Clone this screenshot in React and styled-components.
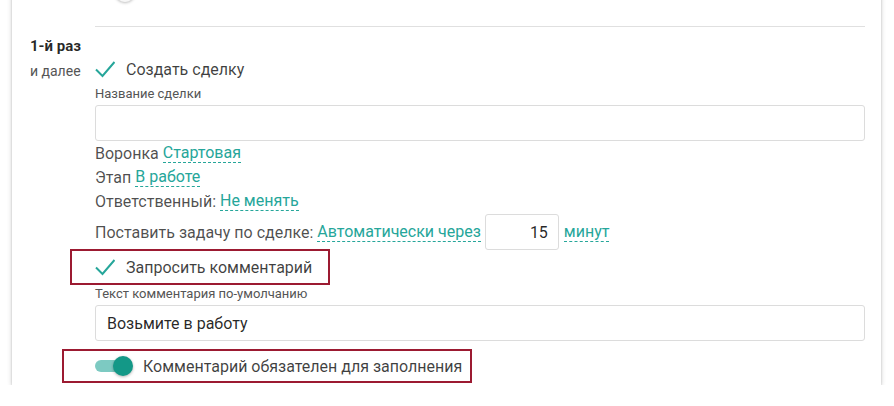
import React from 'react';
import styled, { createGlobalStyle } from 'styled-components';

const GlobalStyle = createGlobalStyle`
  html, body {
    margin: 0;
    padding: 0;
    background: #fff;
    overflow: hidden;
  }
  body {
    font-family: Roboto, "Noto Sans", "Liberation Sans", sans-serif;
    color: rgba(0, 0, 0, 0.8);
  }
`;

const teal = '#26a69a';
const red = '#9c1a31';

const Card = styled.div`
  width: 869px;
  margin: -22px 0 0 12px;
  padding: 0 16px 2px 0;
  box-sizing: border-box;
  background: #fff;
  box-shadow: 0 2px 2px 0 rgba(0, 0, 0, 0.14), 0 3px 1px -2px rgba(0, 0, 0, 0.12),
    0 1px 5px 0 rgba(0, 0, 0, 0.2);
`;

const PrevRow = styled.div`
  display: flex;
  align-items: flex-end;
  height: 48px;
  padding: 0 0 24px 103px;
  box-sizing: border-box;
`;

const GhostThumb = styled.div`
  width: 20px;
  height: 20px;
  border-radius: 50%;
  background: #f7f7f7;
  box-shadow: 0 1px 3px rgba(0, 0, 0, 0.28);
`;

const Divider = styled.div`
  height: 1px;
  margin-left: 83px;
  background: #e0e0e0;
`;

const Section = styled.div`
  display: grid;
  grid-template-columns: 83px 1fr;
`;

const Side = styled.div`
  padding: 9px 0 0 18px;
`;

const SideTitle = styled.div`
  font-size: 15px;
  line-height: 20px;
  font-weight: 700;
  color: rgba(0, 0, 0, 0.85);
`;

const SideNote = styled.div`
  margin-top: 6px;
  font-size: 14px;
  line-height: 18px;
  color: #555;
`;

const Main = styled.div`
  display: flex;
  flex-direction: column;
  align-items: flex-start;
`;

const CheckRow = styled.div`
  display: flex;
  align-items: center;
  gap: 11px;
  height: 28px;
  margin-top: ${p => p.$mt || 0}px;
  font-size: 16px;
  color: rgba(0, 0, 0, 0.75);
`;

const FieldLabel = styled.div`
  margin-top: ${p => p.$mt || 0}px;
  font-size: 13px;
  line-height: 16px;
  color: #555;
`;

const TextInput = styled.input`
  width: 100%;
  height: 36px;
  margin-top: ${p => p.$mt || 0}px;
  box-sizing: border-box;
  border: 1px solid #dcdcdc;
  border-radius: 3px;
  padding: 0 11px;
  font-family: inherit;
  font-size: 16px;
  color: rgba(0, 0, 0, 0.85);
  background: #fff;
  outline: none;
`;

const InfoLine = styled.div`
  display: flex;
  align-items: center;
  height: ${p => p.$h || 24}px;
  font-size: 16px;
  color: rgba(0, 0, 0, 0.7);
  white-space: pre;
`;

const Link = styled.span`
  display: inline-block;
  color: ${teal};
  line-height: 18px;
  border-bottom: 1px dashed ${teal};
  cursor: pointer;
`;

const NumInput = styled.input`
  width: 74px;
  height: 36px;
  margin: 0 5px 0 4px;
  box-sizing: border-box;
  border: 1px solid #dcdcdc;
  border-radius: 3px;
  padding: 0 10px;
  text-align: right;
  font-family: inherit;
  font-size: 16px;
  color: rgba(0, 0, 0, 0.85);
  outline: none;
`;

const Highlight = styled.div`
  display: flex;
  align-items: center;
  gap: ${p => p.$gap}px;
  height: ${p => p.$h}px;
  margin: ${p => p.$mt}px 0 0 ${p => -p.$shift}px;
  padding: 0 ${p => p.$pr}px 0 ${p => p.$shift - 2}px;
  box-sizing: border-box;
  border: 2px solid ${red};
  font-size: 16px;
  color: rgba(0, 0, 0, 0.75);
`;

const Toggle = styled.div`
  position: relative;
  width: 38px;
  height: 20px;
  display: flex;
  align-items: center;
`;

const Track = styled.div`
  width: 34px;
  height: 12px;
  border-radius: 6px;
  background: rgba(38, 166, 154, 0.6);
`;

const Thumb = styled.div`
  position: absolute;
  left: 18px;
  top: 0;
  width: 20px;
  height: 20px;
  border-radius: 50%;
  background: #139887;
  box-shadow: 0 1px 3px rgba(0, 0, 0, 0.3);
`;

function Check() {
  return (
    <svg width="20" height="20" viewBox="0 0 20 20">
      <path d="M1 10.5 L7.5 17 L19.5 3" fill="none" stroke={teal} strokeWidth="2" />
    </svg>
  );
}

export default function App() {
  return (
    <>
      <GlobalStyle />
      <Card>
        <PrevRow>
          <GhostThumb />
        </PrevRow>
        <Divider />
        <Section>
          <Side>
            <SideTitle>1-й раз</SideTitle>
            <SideNote>и далее</SideNote>
          </Side>
          <Main>
            <CheckRow $mt={28}>
              <Check />
              <span>Создать сделку</span>
            </CheckRow>
            <FieldLabel $mt={3}>Название сделки</FieldLabel>
            <TextInput $mt={3} defaultValue="" />
            <InfoLine>Воронка <Link>Стартовая</Link></InfoLine>
            <InfoLine>Этап <Link>В работе</Link></InfoLine>
            <InfoLine>Ответственный: <Link>Не менять</Link></InfoLine>
            <InfoLine $h={38}>
              Поставить задачу по сделке: <Link>Автоматически через</Link>
              <NumInput defaultValue="15" />
              <Link>минут</Link>
            </InfoLine>
            <Highlight $gap={11} $h={36} $mt={-2} $shift={25} $pr={16}>
              <Check />
              <span>Запросить комментарий</span>
            </Highlight>
            <FieldLabel $mt={1}>Текст комментария по-умолчанию</FieldLabel>
            <TextInput $mt={3} defaultValue="Возьмите в работу" />
            <Highlight $gap={10} $h={34} $mt={8} $shift={33} $pr={8}>
              <Toggle>
                <Track />
                <Thumb />
              </Toggle>
              <span>Комментарий обязателен для заполнения</span>
            </Highlight>
          </Main>
        </Section>
      </Card>
    </>
  );
}
